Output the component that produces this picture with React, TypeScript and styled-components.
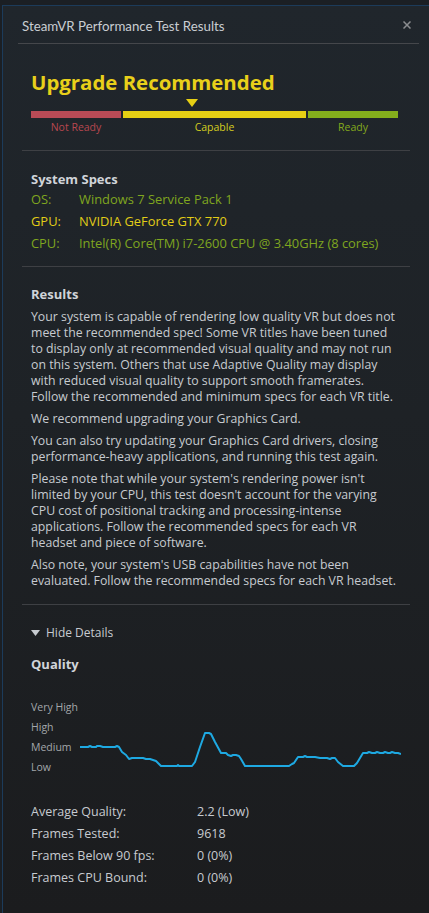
import styled, { createGlobalStyle } from "styled-components";

const GlobalStyle = createGlobalStyle`
  html, body {
    margin: 0;
    padding: 0;
    background: #1b1f24;
  }
  * {
    box-sizing: border-box;
  }
`;

type Level = "bad" | "mid" | "good";

const levelColor: Record<Level, string> = {
  bad: "#b94b56",
  mid: "#e6cf14",
  good: "#84ae1c",
};

const labelColor: Record<Level, string> = {
  bad: "#b8474f",
  mid: "#d3cd1f",
  good: "#84aa1c",
};

const specs = [
  { label: "OS:", value: "Windows 7 Service Pack 1", warn: false },
  { label: "GPU:", value: "NVIDIA GeForce GTX 770", warn: true },
  { label: "CPU:", value: "Intel(R) Core(TM) i7-2600 CPU @ 3.40GHz (8 cores)", warn: false },
];

const paragraphs = [
  [
    "Your system is capable of rendering low quality VR but does not",
    "meet the recommended spec! Some VR titles have been tuned",
    "to display only at recommended visual quality and may not run",
    "on this system. Others that use Adaptive Quality may display",
    "with reduced visual quality to support smooth framerates.",
    "Follow the recommended and minimum specs for each VR title.",
  ],
  ["We recommend upgrading your Graphics Card."],
  [
    "You can also try updating your Graphics Card drivers, closing",
    "performance-heavy applications, and running this test again.",
  ],
  [
    "Please note that while your system's rendering power isn't",
    "limited by your CPU, this test doesn't account for the varying",
    "CPU cost of positional tracking and processing-intense",
    "applications. Follow the recommended specs for each VR",
    "headset and piece of software.",
  ],
  [
    "Also note, your system's USB capabilities have not been",
    "evaluated. Follow the recommended specs for each VR headset.",
  ],
];

const stats = [
  ["Average Quality:", "2.2 (Low)"],
  ["Frames Tested:", "9618"],
  ["Frames Below 90 fps:", "0 (0%)"],
  ["Frames CPU Bound:", "0 (0%)"],
];

const qualityPoints =
  "80,748 88,748 90,747 92,748 96,748 97,747 100,747 103,748 112,748 115,748 117,747 119,748 122,753 126,756 129,760 132,759 143,759 146,760 150,760 153,761 156,762 161,767 177,767 178,766 179,767 192,767 195,763 200,748 205,734 209,734 211,735 215,743 221,754 226,754 228,756 231,757 233,756 236,756 239,757 241,760 245,767 289,767 292,765 294,764 298,758 303,758 305,757 307,758 315,758 320,759 327,759 330,760 332,759 335,759 338,763 343,767 354,767 357,764 363,754 367,754 369,753 372,754 375,754 377,753 380,754 383,754 385,753 388,754 390,754 392,753 395,754 398,754 401,755";

const App = (): JSX.Element => {
  return (
    <Page>
      <GlobalStyle />
      <Dialog>
        <Header>
          <Title>SteamVR Performance Test Results</Title>
          <CloseButton aria-label="Close">
            <svg width="8" height="8" viewBox="0 0 8 8">
              <path d="M0.5 0.5 L7.5 7.5 M7.5 0.5 L0.5 7.5" stroke="#8b8d90" strokeWidth="1.5" />
            </svg>
          </CloseButton>
        </Header>

        <StatusSection>
          <Verdict>Upgrade Recommended</Verdict>
          <Scale>
            <MarkerRow>
              <Marker />
            </MarkerRow>
            <Bars>
              <Segment $level="bad" $grow={90} />
              <Segment $level="mid" $grow={183} />
              <Segment $level="good" $grow={90} />
            </Bars>
            <Bars>
              <SegmentLabel $level="bad" $grow={90}>Not Ready</SegmentLabel>
              <SegmentLabel $level="mid" $grow={183}>Capable</SegmentLabel>
              <SegmentLabel $level="good" $grow={90}>Ready</SegmentLabel>
            </Bars>
          </Scale>
        </StatusSection>
        <Divider />

        <Section $top={19} $bottom={12}>
          <Heading>System Specs</Heading>
          <SpecList>
            {specs.map((s) => (
              <SpecRow key={s.label} $warn={s.warn}>
                <span>{s.label}</span>
                <span>{s.value}</span>
              </SpecRow>
            ))}
          </SpecList>
        </Section>
        <Divider />

        <Section $top={18} $bottom={15}>
          <Heading>Results</Heading>
          <Body>
            {paragraphs.map((lines, i) => (
              <p key={i}>{lines.join("\n")}</p>
            ))}
          </Body>
        </Section>
        <Divider />

        <Section $top={18} $bottom={0}>
          <Toggle>
            <svg width="9" height="6" viewBox="0 0 9 6">
              <path d="M0 0 H9 L4.5 6 Z" fill="#c7cbd0" />
            </svg>
            Hide Details
          </Toggle>
          <Heading $top={12}>Quality</Heading>
          <Chart>
            <ChartLabels>
              <span>Very High</span>
              <span>High</span>
              <span>Medium</span>
              <span>Low</span>
            </ChartLabels>
            <svg width="321" height="80" viewBox="80 698 321 80">
              <polyline
                points={qualityPoints}
                fill="none"
                stroke="#1ea9e2"
                strokeWidth="2"
                strokeLinejoin="round"
              />
            </svg>
          </Chart>
          <Stats>
            {stats.map(([k, v]) => (
              <StatRow key={k}>
                <span>{k}</span>
                <span>{v}</span>
              </StatRow>
            ))}
          </Stats>
        </Section>
      </Dialog>
    </Page>
  );
};

const Page = styled.div`
  min-height: 913px;
  padding: 5px 0 0 2px;
  background: #1b1f24;
  font-family: "Open Sans", "Noto Sans", sans-serif;
`;

const Dialog = styled.div`
  min-height: 908px;
  border-left: 1px solid #1c3b5a;
  border-top: 1px solid #1c3b5a;
  background: linear-gradient(180deg, #20262c 0%, #1e2226 45%, #1b1c1e 100%);
  display: flex;
  flex-direction: column;
`;

const Header = styled.div`
  height: 38px;
  margin: 0 10px 0 15px;
  padding: 3px 4px 0 4px;
  display: flex;
  align-items: center;
  justify-content: space-between;
  border-bottom: 1px solid #45474b;
`;

const Title = styled.div`
  color: #c9cdd2;
  font-family: Lato, "Open Sans", sans-serif;
  font-size: 13.3px;
`;

const CloseButton = styled.div`
  display: flex;
  align-items: center;
  margin-right: 4px;
  margin-top: -2px;
`;

const StatusSection = styled.div`
  padding: 23px 28px 14px 28px;
`;

const Verdict = styled.div`
  color: #e8d01a;
  font-size: 20.4px;
  font-weight: 700;
  line-height: 30px;
`;

const Scale = styled.div`
  width: 367px;
  margin-top: 2px;
`;

const MarkerRow = styled.div`
  height: 12px;
  display: flex;
  padding-left: 155px;
  align-items: flex-start;
`;

const Marker = styled.div`
  width: 0;
  height: 0;
  border-left: 6px solid transparent;
  border-right: 6px solid transparent;
  border-top: 8px solid #e6cf14;
`;

const Bars = styled.div`
  display: flex;
  gap: 2px;
`;

const Segment = styled.div<{ $level: Level; $grow: number }>`
  flex: ${(p) => p.$grow} 0 0;
  height: 7px;
  background: ${(p) => levelColor[p.$level]};
`;

const SegmentLabel = styled.div<{ $level: Level; $grow: number }>`
  flex: ${(p) => p.$grow} 0 0;
  text-align: center;
  color: ${(p) => labelColor[p.$level]};
  font-size: 10.5px;
  line-height: 18px;
`;

const Divider = styled.div`
  height: 1px;
  margin: 0 19px;
  background: #3e4044;
`;

const Section = styled.div<{ $top: number; $bottom: number }>`
  padding: ${(p) => p.$top}px 19px ${(p) => p.$bottom}px 28px;
`;

const Heading = styled.div<{ $top?: number }>`
  color: #d0d4d9;
  font-size: 13px;
  font-weight: 700;
  line-height: 18px;
  margin-top: ${(p) => p.$top ?? 0}px;
`;

const SpecList = styled.div`
  margin-top: 0;
`;

const SpecRow = styled.div<{ $warn: boolean }>`
  display: grid;
  grid-template-columns: 48px 1fr;
  color: ${(p) => (p.$warn ? "#e2cd17" : "#7fa61f")};
  font-size: 12.9px;
  line-height: 22px;
`;

const Body = styled.div`
  margin-top: 6px;
  color: #c7cbd0;
  font-size: 12.3px;
  line-height: 16px;
  white-space: pre;

  p {
    margin: 0 0 6px 0;
  }
  p:last-child {
    margin-bottom: 0;
  }
`;

const Toggle = styled.div`
  display: flex;
  align-items: center;
  gap: 6px;
  color: #c7cbd0;
  font-size: 12px;
  line-height: 20px;
`;

const Chart = styled.div`
  margin-top: 24px;
  display: flex;
  align-items: flex-start;
`;

const ChartLabels = styled.div`
  width: 49px;
  display: flex;
  flex-direction: column;
  color: #a3a7ab;
  font-size: 10.5px;
  line-height: 20px;
  white-space: nowrap;
`;

const Stats = styled.div`
  margin-top: 24px;
`;

const StatRow = styled.div`
  display: grid;
  grid-template-columns: 166px 1fr;
  color: #c7cbd0;
  font-size: 12.5px;
  line-height: 22px;
`;

export default App;
